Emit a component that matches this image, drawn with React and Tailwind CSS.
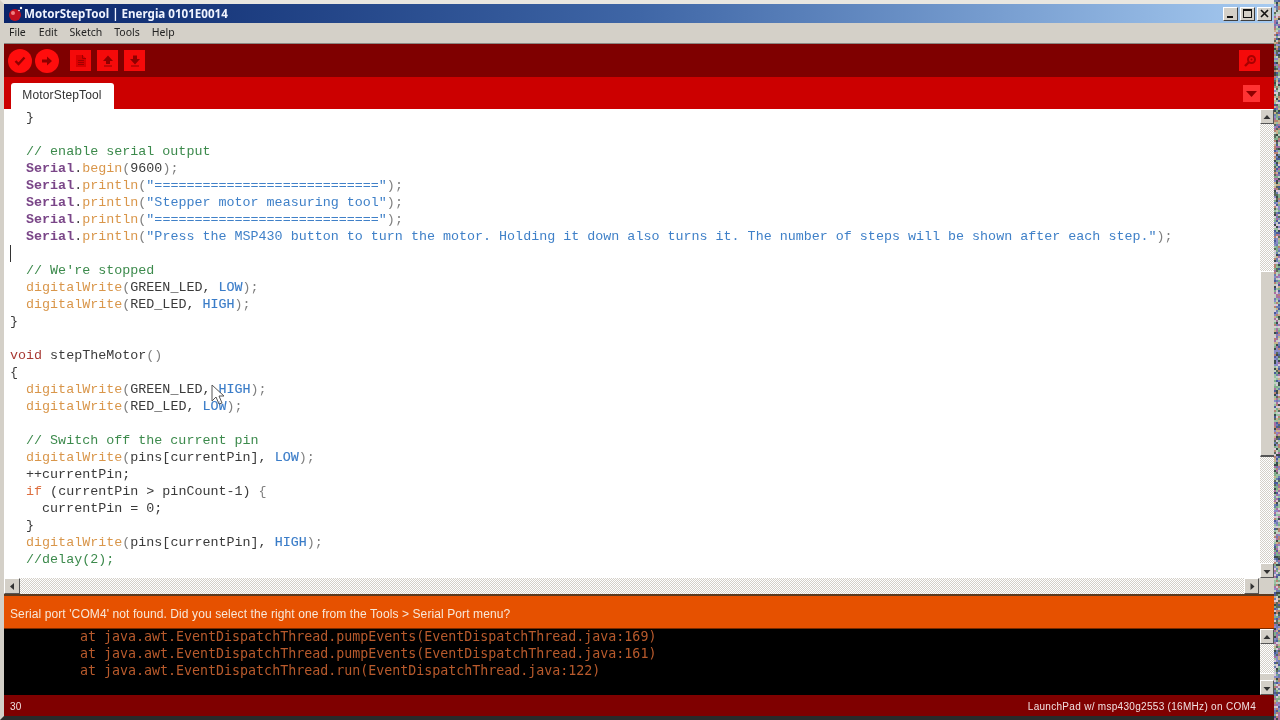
import React from "react";

const S = "text-[#7a4688] font-bold";
const F = "text-[#d9964a]";
const K = "text-[#3a3a3a]";
const P = "text-[#808080]";
const T = "text-[#3f80c8]";
const C = "text-[#3c8a4c]";
const B = "text-[#3a7cc8] [-webkit-text-stroke:0.15px_#3a7cc8]";
const R = "text-[#a83a34]";
const I = "text-[#dd6f3f]";

const dw = (a, b, tail = ");") => [["  "], ["digitalWrite", F], ["(", P], [a, K], [", ", K], [b, B], [tail, P]];
const sp = (s) => [["  "], ["Serial", S], [".", K], ["println", F], ["(", P], [s, T], [");", P]];

const LINES = [
  [["  "], ["}", K]],
  [],
  [["  "], ["// enable serial output", C]],
  [["  "], ["Serial", S], [".", K], ["begin", F], ["(", P], ["9600", K], [");", P]],
  sp('"============================"'),
  sp('"Stepper motor measuring tool"'),
  sp('"============================"'),
  sp('"Press the MSP430 button to turn the motor. Holding it down also turns it. The number of steps will be shown after each step."'),
  "caret",
  [["  "], ["// We're stopped", C]],
  dw("GREEN_LED", "LOW"),
  dw("RED_LED", "HIGH"),
  [["}", K]],
  [],
  [["void", R], [" stepTheMotor", K], ["()", P]],
  [["{", K]],
  dw("GREEN_LED", "HIGH"),
  dw("RED_LED", "LOW"),
  [],
  [["  "], ["// Switch off the current pin", C]],
  dw("pins[currentPin]", "LOW"),
  [["  ++currentPin;", K]],
  [["  "], ["if", I], [" (currentPin > pinCount-1) ", K], ["{", P]],
  [["    currentPin = 0;", K]],
  [["  "], ["}", K]],
  dw("pins[currentPin]", "HIGH"),
  [["  "], ["//delay(2);", C]],
];

function Noise() {
  const rects = [];
  let seed = 12345;
  const rnd = () => {
    seed = (seed * 1664525 + 1013904223) % 4294967296;
    return seed / 4294967296;
  };
  const palette = ["#6a7fb0", "#c9b08a", "#7fae8a", "#a86fa0", "#5a6a5a", "#d8c8d8", "#4a5a9a", "#98c0a0", "#b88070", "#8a8ac8", "#3a4a4a", "#c0d0c0"];
  for (let y = 0; y < 720; y += 2) {
    for (let x = 0; x < 6; x += 2) {
      rects.push(<rect key={x + "-" + y} x={x} y={y} width="2" height="2" fill={palette[Math.floor(rnd() * palette.length)]} />);
    }
  }
  return (
    <svg width="6" height="720" className="block shrink-0" shapeRendering="crispEdges">
      {rects}
    </svg>
  );
}

const Checker = "bg-[repeating-conic-gradient(#d4d0c8_0_25%,#ffffff_0_50%)] bg-[length:2px_2px]";

function WinBtn({ children, className = "" }) {
  return (
    <div className={"w-[15px] h-[14px] bg-[#d4d0c8] border border-t-white border-l-white border-r-[#404040] border-b-[#404040] flex items-center justify-center " + className}>
      <svg width="11" height="10" viewBox="0 0 11 10">{children}</svg>
    </div>
  );
}

function ScrollBtn({ dir, w = "w-[14px]", h = "h-[15px]" }) {
  const pts = { up: "3.5,9 10.5,9 7,5", down: "3.5,6 10.5,6 7,10", left: "9,4 9,11 5,7.5", right: "5.5,4 5.5,11 9.5,7.5" }[dir];
  return (
    <div className={w + " " + h + " shrink-0 bg-[#d4d0c8] border-t border-l border-t-white border-l-white border-b border-r border-b-[#555] border-r-[#555] flex items-center justify-center"}>
      <svg width="14" height="14" viewBox="0 0 14 14" className="shrink-0"><polygon points={pts} fill="#333" /></svg>
    </div>
  );
}

function RoundBtn({ children }) {
  return (
    <div className="w-[24px] h-[24px] rounded-full bg-[#ff0d0d] flex items-center justify-center">
      <svg width="16" height="16" viewBox="0 0 16 16">{children}</svg>
    </div>
  );
}

function SquareBtn({ children }) {
  return (
    <div className="w-[21px] h-[21px] bg-[#f50a0a] flex items-center justify-center">
      <svg width="16" height="16" viewBox="0 0 16 16">{children}</svg>
    </div>
  );
}

export default function App() {
  return (
    <div className="w-[1280px] h-[720px] flex overflow-hidden bg-[#d4d0c8]">
      <div className="flex-1 flex flex-col border-l-[4px] border-l-[#d4d0c8] border-t-[4px] border-t-[#e8e6e0] border-b-[4px] border-b-[#2a2a2a] min-w-0 blur-[0.35px]">
        {/* Title bar */}
        <div className="h-[19px] shrink-0 flex items-center bg-gradient-to-r from-[#0a246a] via-[#3f66a6] to-[#a6caf0] pl-[5px] pr-[2px]">
          <svg width="14" height="16" viewBox="0 0 14 16" className="shrink-0">
            <circle cx="6" cy="9" r="6" fill="#c01020" />
            <circle cx="4" cy="7" r="2" fill="#f08080" />
            <circle cx="12" cy="2" r="1.2" fill="#ffffff" />
            <circle cx="10" cy="4.5" r="0.8" fill="#ffffff" />
          </svg>
          <span className="ml-[1px] text-[#f0f4ff] font-bold text-[11.6px] font-['Noto_Sans',sans-serif] whitespace-nowrap">MotorStepTool | Energia 0101E0014</span>
          <div className="ml-auto flex gap-[1px] items-center">
            <WinBtn className="mr-[1px]"><rect x="2" y="7" width="6" height="2" fill="#111" /></WinBtn>
            <WinBtn><rect x="1.5" y="0.5" width="8" height="8" fill="none" stroke="#111" /><rect x="1" y="0" width="9" height="2" fill="#111" /></WinBtn>
            <WinBtn className="ml-[1px]"><path d="M2 1 L9 8 M9 1 L2 8" stroke="#111" strokeWidth="1.6" /></WinBtn>
          </div>
        </div>
        {/* Menu */}
        <div className="h-[21px] shrink-0 bg-[#d4d0c8] border-b border-b-[#8a8682] flex items-center pl-[5px] gap-[12px] text-[10.5px] text-[#222] font-['Noto_Sans',sans-serif]">
          <span>File</span><span className="ml-[1px]">Edit</span><span>Sketch</span><span>Tools</span><span>Help</span>
        </div>
        {/* Toolbar */}
        <div className="h-[33px] shrink-0 bg-[#7f0000] flex items-center pl-[4px] pr-[14px]">
          <RoundBtn><path d="M3.5 8 L6.5 11 L12.5 4.5" fill="none" stroke="#8f0000" strokeWidth="2.4" /></RoundBtn>
          <div className="w-[3px]" />
          <RoundBtn><path d="M3 6.5 H8 V3.5 L13 8 L8 12.5 V9.5 H3 Z" fill="#8f0000" /></RoundBtn>
          <div className="w-[11px]" />
          <SquareBtn><path d="M3 2 H9.5 L13 5.5 V14 H3 Z" fill="#d80000" /><path d="M9.5 2 V5.5 H13 M5 7.5 H11 M5 9.5 H11 M5 11.5 H11" stroke="#a00000" fill="none" /></SquareBtn>
          <div className="w-[6px]" />
          <SquareBtn><path d="M8 2.5 L13 8 H10 V11 H6 V8 H3 Z M4 12.5 H12 V13.5 H4 Z" fill="#8f0000" /></SquareBtn>
          <div className="w-[6px]" />
          <SquareBtn><path d="M6 2.5 H10 V6 H13 L8 11.5 L3 6 H6 Z M4 12.5 H12 V13.5 H4 Z" fill="#8f0000" /></SquareBtn>
          <div className="ml-auto">
            <SquareBtn><circle cx="9.5" cy="6.5" r="3.5" fill="none" stroke="#a80000" strokeWidth="2" /><path d="M7 9 L3 13" stroke="#a80000" strokeWidth="2.4" /><circle cx="9.5" cy="6.5" r="1" fill="#a80000" /></SquareBtn>
          </div>
        </div>
        {/* Tabs */}
        <div className="h-[32px] shrink-0 bg-[#cc0000] flex items-end pl-[7px] pr-[14px]">
          <div className="w-[103px] h-[26px] pb-[3px] pr-[1px] bg-white rounded-t-[3px] flex items-center justify-center text-[12px] tracking-[0.15px] text-[#333] font-['Liberation_Sans',sans-serif]">MotorStepTool</div>
          <div className="ml-auto mb-[7px] w-[17px] h-[17px] bg-[#ff3333] flex items-center justify-center">
            <svg width="11" height="6" viewBox="0 0 11 6"><polygon points="0,0 11,0 5.5,6" fill="#8f0000" /></svg>
          </div>
        </div>
        {/* Editor */}
        <div className="h-[485px] shrink-0 flex flex-col bg-white">
          <div className="flex-1 min-h-0 flex">
            <div className="relative flex-1 min-w-0 overflow-hidden pl-[6px] font-['Liberation_Mono',monospace] text-[13.36px] leading-[17px] whitespace-pre">
              {LINES.map((l, i) =>
                l === "caret" ? (
                  <div key={i} className="h-[17px]"><div className="w-px h-[17px] bg-[#333]" /></div>
                ) : (
                  <div key={i} className="h-[17px]">
                    {l.map((t, j) => <span key={j} className={t[1] || ""}>{t[0]}</span>)}
                  </div>
                )
              )}
              <svg width="14" height="22" viewBox="0 0 14 22" className="absolute left-[207px] top-[275px]">
                <path d="M1 1 V17 L5 13 L8 20 L11 19 L8 12 L13 12 Z" fill="#ffffffb0" stroke="#555" strokeWidth="1" />
              </svg>
            </div>
            <div className="w-[14px] shrink-0 flex flex-col bg-white">
              <ScrollBtn dir="up" />
              <div className={"h-[147px] shrink-0 " + Checker} />
              <div className="h-[186px] shrink-0 bg-[#d4d0c8] border-t border-l border-t-white border-l-white border-b-2 border-b-[#555]" />
              <div className={"flex-1 " + Checker} />
              <ScrollBtn dir="down" />
            </div>
          </div>
          <div className="h-[16px] shrink-0 flex">
            <ScrollBtn dir="left" w="w-[16px]" h="h-[16px]" />
            <div className={"flex-1 " + Checker} />
            <ScrollBtn dir="right" w="w-[15px]" h="h-[16px]" />
            <div className="w-[15px] bg-[#d4d0c8]" />
          </div>
        </div>
        {/* Message */}
        <div className="h-[34px] shrink-0 bg-[#e65100] border-t-2 border-t-[#5a3a20] flex items-center pl-[6px] pt-[3px] text-[12px] tracking-[0.1px] text-[#f8e8d8] font-['Liberation_Sans',sans-serif] whitespace-nowrap">
          Serial port 'COM4' not found. Did you select the right one from the Tools &gt; Serial Port menu?
        </div>
        {/* Console */}
        <div className="h-[67px] shrink-0 bg-black flex border-t border-t-[#7a2a00]">
          <div className="flex-1 min-w-0 pl-[76px] -mt-[1px] font-['DejaVu_Sans_Mono',monospace] text-[13.31px] leading-[17px] text-[#b85a2c] whitespace-pre">
            <div className="h-[17px]">at java.awt.EventDispatchThread.pumpEvents(EventDispatchThread.java:169)</div>
            <div className="h-[17px]">at java.awt.EventDispatchThread.pumpEvents(EventDispatchThread.java:161)</div>
            <div className="h-[17px]">at java.awt.EventDispatchThread.run(EventDispatchThread.java:122)</div>
          </div>
          <div className="w-[14px] shrink-0 flex flex-col">
            <ScrollBtn dir="up" />
            <div className={"flex-1 " + Checker} />
            <div className="h-[7px] bg-[#d4d0c8] border-t border-t-white" />
            <ScrollBtn dir="down" />
          </div>
        </div>
        {/* Status */}
        <div className="flex-1 min-h-0 bg-[#7f0000] flex items-center justify-between pl-[6px] pr-[18px] pt-[2px] text-[10px] tracking-[0.3px] text-[#f0e0e0] font-['Liberation_Sans',sans-serif] whitespace-nowrap">
          <span>30</span>
          <span>LaunchPad w/ msp430g2553 (16MHz) on COM4</span>
        </div>
      </div>
      <Noise />
    </div>
  );
}
